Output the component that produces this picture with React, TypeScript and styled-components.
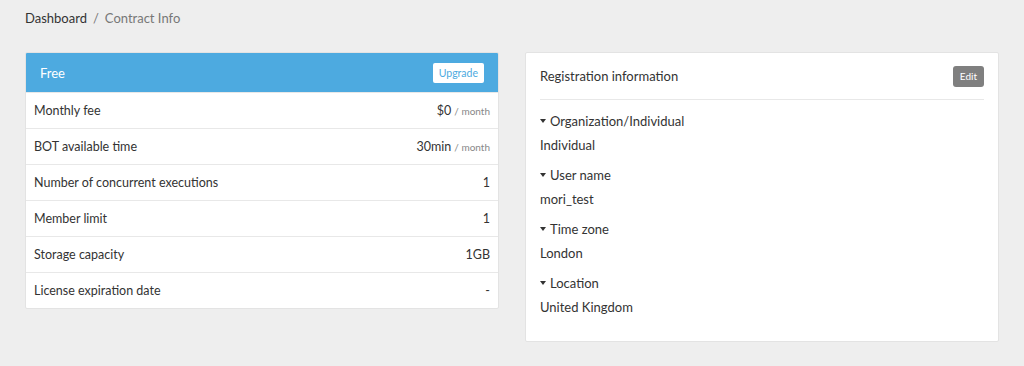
import { createGlobalStyle } from "styled-components";
import styled from "styled-components";

const GlobalStyle = createGlobalStyle`
  body {
    margin: 0;
    background-color: #eeeeee;
    font-family: "Lato", "Noto Sans", sans-serif;
    color: #333333;
  }
`;

const Page = styled.div`
  width: 1024px;
  height: 366px;
  padding: 9px 25px 0 25px;
  box-sizing: border-box;
`;

const Breadcrumb = styled.div`
  font-size: 13px;
  line-height: 18px;
  display: flex;
  gap: 6px;
  color: #333;
`;

const Crumb = styled.span<{ $current?: boolean }>`
  color: ${(p) => (p.$current ? "#777" : "#333")};
`;

const Columns = styled.div`
  display: grid;
  grid-template-columns: 474px 474px;
  gap: 26px;
  margin-top: 25px;
  align-items: start;
`;

const Card = styled.div`
  background-color: #fff;
  border: 1px solid #e3e3e3;
  border-radius: 2px;
  overflow: hidden;
`;

const PlanHeader = styled.div`
  height: 39px;
  background-color: #4daae0;
  display: flex;
  align-items: center;
  justify-content: space-between;
  padding: 0 14px;
  color: #fff;
  font-size: 13px;
`;

const UpgradeButton = styled.button`
  background: #fff;
  border: none;
  border-radius: 2px;
  color: #4daae0;
  font-family: inherit;
  font-size: 10.5px;
  height: 20px;
  padding: 0 6px;
`;

const Row = styled.div`
  height: 36px;
  display: flex;
  align-items: center;
  justify-content: space-between;
  padding: 0 8px;
  font-size: 12.5px;
  border-top: 1px solid #e8e8e8;
  box-sizing: border-box;
  &:first-of-type {
    border-top: none;
  }
`;

const Unit = styled.small`
  font-size: 10px;
  color: #888;
  margin-left: 3px;
`;

const RegBody = styled.div`
  padding: 0 14px 25px 14px;
`;

const RegHeader = styled.div`
  height: 46px;
  display: flex;
  align-items: center;
  justify-content: space-between;
  border-bottom: 1px solid #e8e8e8;
  font-size: 13px;
`;

const EditButton = styled.button`
  background: #7f7f7f;
  color: #fff;
  border: none;
  border-radius: 3px;
  font-family: inherit;
  font-size: 10px;
  height: 21px;
  padding: 0 7px;
`;

const Field = styled.div`
  margin-top: 12px;
  font-size: 13px;
`;

const FieldLabel = styled.div`
  display: flex;
  align-items: center;
  gap: 4px;
  line-height: 18px;
`;

const Caret = styled.span`
  width: 0;
  height: 0;
  border-left: 3.5px solid transparent;
  border-right: 3.5px solid transparent;
  border-top: 4px solid #333;
`;

const FieldValue = styled.div`
  margin-top: 6px;
  line-height: 18px;
`;

const plan = [
  { label: "Monthly fee", value: "$0", unit: "/ month" },
  { label: "BOT available time", value: "30min", unit: "/ month" },
  { label: "Number of concurrent executions", value: "1" },
  { label: "Member limit", value: "1" },
  { label: "Storage capacity", value: "1GB" },
  { label: "License expiration date", value: "-" },
];

const registration = [
  { label: "Organization/Individual", value: "Individual" },
  { label: "User name", value: "mori_test" },
  { label: "Time zone", value: "London" },
  { label: "Location", value: "United Kingdom" },
];

function App() {
  return (
    <Page>
      <GlobalStyle />
      <Breadcrumb>
        <Crumb>Dashboard</Crumb>
        <Crumb $current>/</Crumb>
        <Crumb $current>Contract Info</Crumb>
      </Breadcrumb>
      <Columns>
        <Card>
          <PlanHeader>
            <span>Free</span>
            <UpgradeButton>Upgrade</UpgradeButton>
          </PlanHeader>
          {plan.map((r) => (
            <Row key={r.label}>
              <span>{r.label}</span>
              <span>
                {r.value}
                {r.unit ? <Unit>{r.unit}</Unit> : null}
              </span>
            </Row>
          ))}
        </Card>
        <Card>
          <RegBody>
            <RegHeader>
              <span>Registration information</span>
              <EditButton>Edit</EditButton>
            </RegHeader>
            {registration.map((f) => (
              <Field key={f.label}>
                <FieldLabel>
                  <Caret />
                  {f.label}
                </FieldLabel>
                <FieldValue>{f.value}</FieldValue>
              </Field>
            ))}
          </RegBody>
        </Card>
      </Columns>
    </Page>
  );
}

export default App;
